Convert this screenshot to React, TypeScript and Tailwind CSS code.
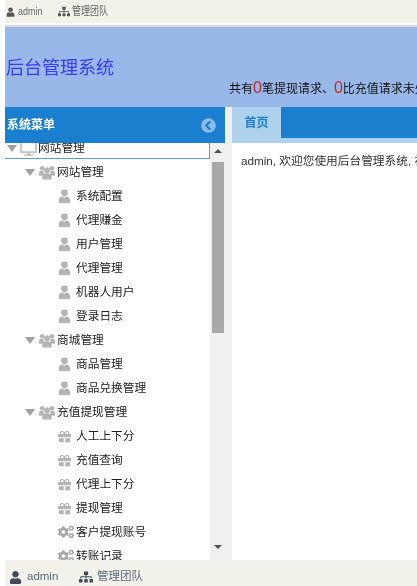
import { FaUser, FaGift, FaCogs, FaDesktop, FaSitemap, FaChevronCircleLeft } from "react-icons/fa";
import type { ReactNode } from "react";

const FONT = "font-['Liberation_Sans','Noto_Sans_CJK_SC',sans-serif]";

type TreeRow = {
  label: string;
  level: 1 | 2;
  icon: ReactNode;
};

function Bust({ className }: { className: string }) {
  return (
    <svg viewBox="0 0 14 15" className={className} fill="currentColor">
      <circle cx="7" cy="4" r="3.6" />
      <path d="M1 15v-3.2C1 9.4 3 8.2 5 8l2 1 2-1c2 .2 4 1.4 4 3.8V15z" />
    </svg>
  );
}

function Group({ className }: { className: string }) {
  return (
    <svg viewBox="0 0 17 15" className={className} fill="currentColor">
      <circle cx="3.4" cy="3" r="2.4" />
      <circle cx="13.6" cy="3" r="2.4" />
      <path d="M0 11V8c0-1.6 1.2-2.4 2.6-2.4h2.4V11z" />
      <path d="M17 11V8c0-1.6-1.2-2.4-2.6-2.4H12V11z" />
      <circle cx="8.5" cy="5" r="3" />
      <path d="M3.6 15v-3.4c0-2 1.6-3.2 3.2-3.2h3.4c1.6 0 3.2 1.2 3.2 3.2V15z" />
    </svg>
  );
}

const userIcon = <Bust className="w-[13px] h-[14px] text-[#b4b4b4]" />;
const groupIcon = <Group className="w-[16px] h-[15px] text-[#b4b4b4]" />;
const giftIcon = <FaGift className="w-[13px] h-[13px] text-[#b4b4b4]" />;
const cogsIcon = <FaCogs className="w-[16px] h-[14px] text-[#a8a8a8]" />;

const ROWS: TreeRow[] = [
  { label: "网站管理", level: 1, icon: groupIcon },
  { label: "系统配置", level: 2, icon: userIcon },
  { label: "代理赚金", level: 2, icon: userIcon },
  { label: "用户管理", level: 2, icon: userIcon },
  { label: "代理管理", level: 2, icon: userIcon },
  { label: "机器人用户", level: 2, icon: userIcon },
  { label: "登录日志", level: 2, icon: userIcon },
  { label: "商城管理", level: 1, icon: groupIcon },
  { label: "商品管理", level: 2, icon: userIcon },
  { label: "商品兑换管理", level: 2, icon: userIcon },
  { label: "充值提现管理", level: 1, icon: groupIcon },
  { label: "人工上下分", level: 2, icon: giftIcon },
  { label: "充值查询", level: 2, icon: giftIcon },
  { label: "代理上下分", level: 2, icon: giftIcon },
  { label: "提现管理", level: 2, icon: giftIcon },
  { label: "客户提现账号", level: 2, icon: cogsIcon },
  { label: "转账记录", level: 2, icon: cogsIcon },
];

function Caret() {
  return <span className="block w-0 h-0 border-x-[5px] border-x-transparent border-t-[7px] border-t-[#a0a0a0]" />;
}

export default function App() {
  return (
    <div className={`${FONT} w-[417px] h-[586px] overflow-hidden bg-white pl-[5px] flex flex-col blur-[0.4px]`}>
      {/* Top user bar */}
      <div className="h-[23px] shrink-0 pl-[1px] flex items-center text-[9px] text-[#666] bg-[#f3f2ea]">
        <Bust className="w-[9px] h-[14px] text-[#555] mr-[3px]" />
        <span className="scale-y-125 w-[40px]">admin</span>
        <FaSitemap className="w-[12px] h-[13px] text-[#555] mr-[2px]" />
        <span className="scale-y-125">管理团队</span>
      </div>
      <div className="h-[4px] shrink-0 border-b-2 border-b-[#d8d8d8]" />

      {/* Header */}
      <div className="h-[80px] shrink-0 bg-[#97b8e8] flex items-end overflow-hidden whitespace-nowrap">
        <div className="pb-[27px] pl-[1px] w-[224px] shrink-0 text-[18px] leading-[24px] text-[#3a3af5]">后台管理系统</div>
        <div className="pb-[8px] text-[12px] leading-[20px] text-[#111]">
          共有<span className="text-[16px] text-[#c8282c]">0</span>笔提现请求、<span className="text-[16px] text-[#c8282c]">0</span>比充值请求未处理
        </div>
      </div>

      <div className="flex-1 min-h-0 flex">
        {/* Sidebar */}
        <div className="w-[220px] shrink-0 flex flex-col">
          <div className="h-[36px] shrink-0 bg-[#1a7fcf] flex items-center justify-between pl-[2px] pr-[9px]">
            <span className="text-[12px] font-bold text-white">系统菜单</span>
            <FaChevronCircleLeft className="w-[15px] h-[15px] text-[#8fbdea]" />
          </div>
          <div className="flex-1 min-h-0 flex">
            <div className="w-[205px] shrink-0 overflow-hidden">
              <div className="h-[16px] flex items-center border-b border-r border-[#5b9bd8] overflow-hidden">
                <span className="ml-[2px] mr-[3px] -mt-[5px]"><Caret /></span>
                <FaDesktop className="w-[17px] h-[15px] text-[#c4c4c4] -mt-[5px]" />
                <span className="text-[11.7px] leading-[16px] text-[#222] -mt-[5px] ml-[1px]">网站管理</span>
              </div>
              <div className="mt-[1px]">
                {ROWS.map((row) => (
                  <div key={row.label} className={row.level === 1 ? "h-[24px] flex items-center pl-[20px] whitespace-nowrap" : "h-[24px] flex items-center pl-[53px] whitespace-nowrap"}>
                    {row.level === 1 && <span className="mr-[4px]"><Caret /></span>}
                    <span className={row.level === 1 ? "w-[18px] flex justify-start" : "w-[18px] flex justify-start"}>{row.icon}</span>
                    <span className="text-[11.7px] text-[#222]">{row.label}</span>
                  </div>
                ))}
              </div>
            </div>
            {/* Scrollbar */}
            <div className="w-[15px] shrink-0 bg-[#f0f0f0] flex flex-col items-center">
              <div className="h-[19px] pt-[6px] flex justify-center">
                <span className="block w-0 h-0 border-x-[4px] border-x-transparent border-b-[4px] border-b-[#505050]" />
              </div>
              <div className="w-[12px] h-[171px] bg-[#a8a8a8]" />
              <div className="flex-1" />
              <div className="h-[15px] flex justify-center">
                <span className="block w-0 h-0 border-x-[4px] border-x-transparent border-t-[4px] border-t-[#505050]" />
              </div>
            </div>
          </div>
        </div>

        {/* Splitter */}
        <div className="w-[7px] shrink-0 bg-[#f0f0f0]" />

        {/* Main */}
        <div className="flex-1 min-w-0 flex flex-col overflow-hidden">
          <div className="h-[31px] shrink-0 bg-[#1a7fcf] flex">
            <div className="w-[49px] bg-[#aed1ee] flex items-center justify-center text-[12px] font-bold text-[#1a7fcf]">首页</div>
          </div>
          <div className="h-[5px] shrink-0 bg-[#aed1ee]" />
          <div className="pt-[8px] pl-[9px] text-[11.7px] leading-[20px] text-[#333] whitespace-nowrap">admin, 欢迎您使用后台管理系统, 祝您工作愉快！</div>
        </div>
      </div>

      {/* Bottom user bar */}
      <div className="h-[26px] shrink-0 pl-[4px] pt-[8px] flex items-center text-[11.5px] text-[#5a6b80] bg-[#f3f2ea]">
        <FaUser className="w-[13px] h-[13px] text-[#3f4a5a] mr-[5px]" />
        <span className="w-[52px]">admin</span>
        <FaSitemap className="w-[14px] h-[14px] text-[#3f4a5a] mr-[4px]" />
        <span>管理团队</span>
      </div>
    </div>
  );
}
